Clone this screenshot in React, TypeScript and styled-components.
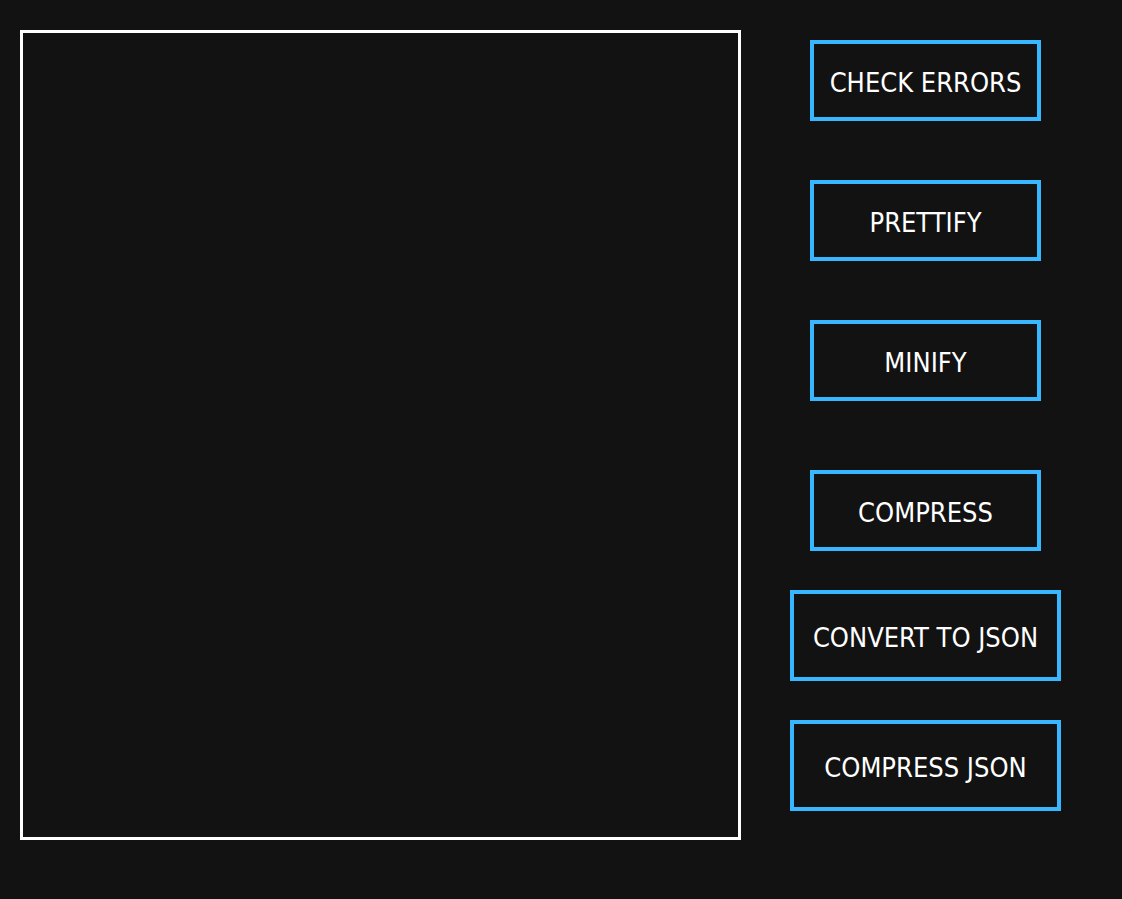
import React from "react";
import styled, { createGlobalStyle } from "styled-components";

const Global = createGlobalStyle`
  html, body { margin: 0; padding: 0; background: #121212; }
  body { font-family: "DejaVu Sans Condensed", "DejaVu Sans", sans-serif; }
`;

const Page = styled.div`
  display: flex;
  align-items: flex-start;
  padding: 30px 0 0 20px;
  min-height: 869px;
  box-sizing: border-box;
`;

const Editor = styled.textarea`
  width: 721px;
  height: 810px;
  box-sizing: border-box;
  border: 3px solid #ffffff;
  background: #121212;
  color: #ffffff;
  resize: none;
  outline: none;
  margin: 0;
  padding: 4px;
  font-family: "DejaVu Sans Mono", monospace;
  font-size: 14px;
`;

const Actions = styled.div`
  width: 371px;
  margin-left: -1px;
  display: flex;
  flex-direction: column;
  align-items: center;
`;

const Action = styled.button<{ $wide?: boolean; $mt: number }>`
  margin-top: ${(p) => p.$mt}px;
  width: ${(p) => (p.$wide ? 271 : 231)}px;
  height: ${(p) => (p.$wide ? 91 : 81)}px;
  box-sizing: border-box;
  border: 4px solid #38b6ff;
  background: #121212;
  color: #ffffff;
  font-family: "DejaVu Sans Condensed", "DejaVu Sans", sans-serif;
  font-size: 27px;
  line-height: 1;
  padding: 4px 0 0;
  white-space: nowrap;
  cursor: pointer;
`;

const buttons = [
  { label: "CHECK ERRORS", mt: 10 },
  { label: "PRETTIFY", mt: 59 },
  { label: "MINIFY", mt: 59 },
  { label: "COMPRESS", mt: 69 },
  { label: "CONVERT TO JSON", mt: 39, wide: true },
  { label: "COMPRESS JSON", mt: 39, wide: true },
];

export default function App() {
  return (
    <>
      <Global />
      <Page>
        <Editor spellCheck={false} />
        <Actions>
          {buttons.map((b) => (
            <Action key={b.label} $mt={b.mt} $wide={b.wide}>
              {b.label}
            </Action>
          ))}
        </Actions>
      </Page>
    </>
  );
}
